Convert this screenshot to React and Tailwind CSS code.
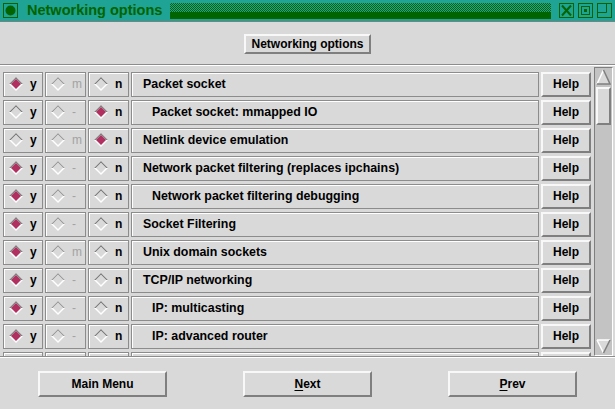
import React from "react";

const rows = [
  { name: "Packet socket", y: true, m: "m", n: false },
  { name: "Packet socket: mmapped IO", indent: true, y: false, m: "-", n: true },
  { name: "Netlink device emulation", y: false, m: "m", n: true },
  { name: "Network packet filtering (replaces ipchains)", y: true, m: "-", n: false },
  { name: "Network packet filtering debugging", indent: true, y: true, m: "-", n: false },
  { name: "Socket Filtering", y: true, m: "-", n: false },
  { name: "Unix domain sockets", y: true, m: "m", n: false },
  { name: "TCP/IP networking", y: true, m: "-", n: false },
  { name: "IP: multicasting", indent: true, y: true, m: "-", n: false },
  { name: "IP: advanced router", indent: true, y: true, m: "-", n: false },
  { name: "IP: policy routing", indent: true, y: true, m: "-", n: false },
];

function Diamond({ on, dim }) {
  const edge = dim ? "#9c9c9c" : "#7f7f7f";
  return (
    <svg width="14" height="14" viewBox="0 0 14 14" className="shrink-0">
      <polygon points="7,0 14,7 7,14 0,7" fill="#ffffff" />
      <polygon points="0,7 7,0 14,7 12,7 7,2 2,7" fill={edge} />
      <polygon points="7,2 12,7 7,12 2,7" fill={on ? "#b03060" : "#d9d9d9"} />
    </svg>
  );
}

function Choice({ on, label, dim, w }) {
  return (
    <div
      className={`${w} h-[25px] shrink-0 flex items-center gap-[7px] pl-[5px] border border-[#8c8c8c] shadow-[inset_1px_1px_0_#ffffff]`}
    >
      <Diamond on={on} dim={dim} />
      <span className={`text-[12px] leading-none ${dim ? "text-[#a3a3a3]" : "text-black font-bold"}`}>
        {label}
      </span>
    </div>
  );
}

function Row({ row }) {
  return (
    <div className="flex items-center h-[28px] gap-[2px] pl-[3px]">
      <Choice on={row.y} label="y" w="w-[40px]" />
      <Choice on={false} label={row.m} dim w="w-[41px]" />
      <Choice on={row.n} label="n" w="w-[41px]" />
      <div className="w-[408px] h-[25px] shrink-0 flex items-center border border-[#8c8c8c] shadow-[inset_1px_1px_0_#ffffff]">
        <span className={`text-[12.4px] font-bold text-black whitespace-nowrap ${row.indent ? "pl-[20px]" : "pl-[11px]"}`}>
          {row.name}
        </span>
      </div>
      <div className="w-[50px] h-[25px] shrink-0 flex items-center justify-center border-2 border-t-[#f8f8f8] border-l-[#f8f8f8] border-r-[#7f7f7f] border-b-[#7f7f7f]">
        <span className="text-[12px] font-bold text-black">Help</span>
      </div>
    </div>
  );
}

function RaisedButton({ children, className }) {
  return (
    <div
      className={`flex items-center justify-center border-2 border-t-[#f8f8f8] border-l-[#f8f8f8] border-r-[#7f7f7f] border-b-[#7f7f7f] text-[12px] font-bold text-black whitespace-nowrap ${className}`}
    >
      {children}
    </div>
  );
}

export default function App() {
  return (
    <div
      className="w-[615px] h-[409px] bg-[#d9d9d9] flex flex-col overflow-hidden"
      style={{ fontFamily: '"Liberation Sans", Arial, sans-serif' }}
    >
      {/* title bar */}
      <div className="h-[22px] shrink-0 bg-[#1fa394] border-b border-[#7f7f7f] flex items-center">
        <svg width="15" height="15" viewBox="0 0 15 15" className="ml-[3px] shrink-0">
          <rect x="0.5" y="0.5" width="14" height="14" fill="none" stroke="#006400" />
          <circle cx="7.5" cy="7.5" r="5" fill="#006400" />
        </svg>
        <span className="ml-[9px] w-[143px] shrink-0 whitespace-nowrap text-[14.5px] font-bold text-[#006400] leading-none">
          Networking options
        </span>
        <div className="w-[381px] shrink-0 h-[16px] flex flex-col">
          <div className="h-[9px] bg-[repeating-conic-gradient(#006400_0_25%,#1fa394_0_50%)] bg-[length:2px_2px]" />
          <div className="h-[7px] bg-[#006400] bg-[radial-gradient(#1fa394_30%,transparent_31%)] bg-[length:3px_2px]" />
        </div>
        <div className="ml-[8px] flex gap-[4px] shrink-0">
          <svg width="15" height="15" viewBox="0 0 15 15">
            <rect x="0.5" y="0.5" width="14" height="14" fill="none" stroke="#006400" />
            <path d="M3 2.5 L12 12.5 M12 2.5 L3 12.5" stroke="#006400" strokeWidth="2" />
          </svg>
          <svg width="15" height="15" viewBox="0 0 15 15">
            <rect x="0.5" y="0.5" width="14" height="14" fill="none" stroke="#006400" />
            <rect x="3.5" y="3.5" width="8" height="8" fill="none" stroke="#006400" />
            <rect x="6" y="6" width="3" height="3" fill="#006400" />
          </svg>
          <svg width="15" height="15" viewBox="0 0 15 15">
            <rect x="0.5" y="0.5" width="14" height="14" fill="none" stroke="#006400" />
            <path d="M0.5 9.5 H9.5 V0.5" fill="none" stroke="#006400" />
          </svg>
        </div>
      </div>

      {/* header button */}
      <div className="h-[43px] shrink-0 flex justify-center pt-[12px] border-b border-[#8c8c8c]">
        <RaisedButton className="w-[127px] h-[20px]">Networking options</RaisedButton>
      </div>

      {/* list */}
      <div className="h-[292px] shrink-0 flex border-t border-white border-b border-b-[#8c8c8c] overflow-hidden">
        <div className="w-[594px] shrink-0 pt-[4px]">
          {rows.map((r, i) => (
            <Row key={i} row={r} />
          ))}
        </div>
        <div className="mt-[1px] w-[19px] h-[289px] bg-[#c3c3c3] border border-t-[#7f7f7f] border-l-[#7f7f7f] border-r-white border-b-white flex flex-col items-center pt-[1px]">
          <svg width="15" height="16" viewBox="0 0 15 16">
            <polygon points="7.5,1 14,15 1,15" fill="#d9d9d9" />
            <path d="M1 15 L7.5 1" stroke="#ffffff" strokeWidth="1.5" />
            <path d="M7.5 1 L14 15 L1 15" fill="none" stroke="#7f7f7f" strokeWidth="1.5" />
          </svg>
          <div className="mt-[2px] w-[15px] h-[38px] bg-[#d9d9d9] border-2 border-t-[#f8f8f8] border-l-[#f8f8f8] border-r-[#7f7f7f] border-b-[#7f7f7f]" />
          <div className="flex-1" />
          <svg width="15" height="15" viewBox="0 0 15 15" className="mb-[1px]">
            <polygon points="1,1 14,1 7.5,14" fill="#d9d9d9" />
            <path d="M1 1 H14 M1 1 L7.5 14" fill="none" stroke="#ffffff" strokeWidth="1.5" />
            <path d="M14 1 L7.5 14" stroke="#7f7f7f" strokeWidth="1.5" />
          </svg>
        </div>
      </div>

      {/* bottom buttons */}
      <div className="flex-1 border-t border-white grid grid-cols-3 items-start pt-[13px]">
        <div className="flex justify-center">
          <RaisedButton className="w-[129px] h-[26px]">Main Menu</RaisedButton>
        </div>
        <div className="flex justify-center">
          <RaisedButton className="w-[129px] h-[26px]">
            <span className="underline underline-offset-2">N</span>ext
          </RaisedButton>
        </div>
        <div className="flex justify-center">
          <RaisedButton className="w-[129px] h-[26px]">
            <span className="underline underline-offset-2">P</span>rev
          </RaisedButton>
        </div>
      </div>
    </div>
  );
}
